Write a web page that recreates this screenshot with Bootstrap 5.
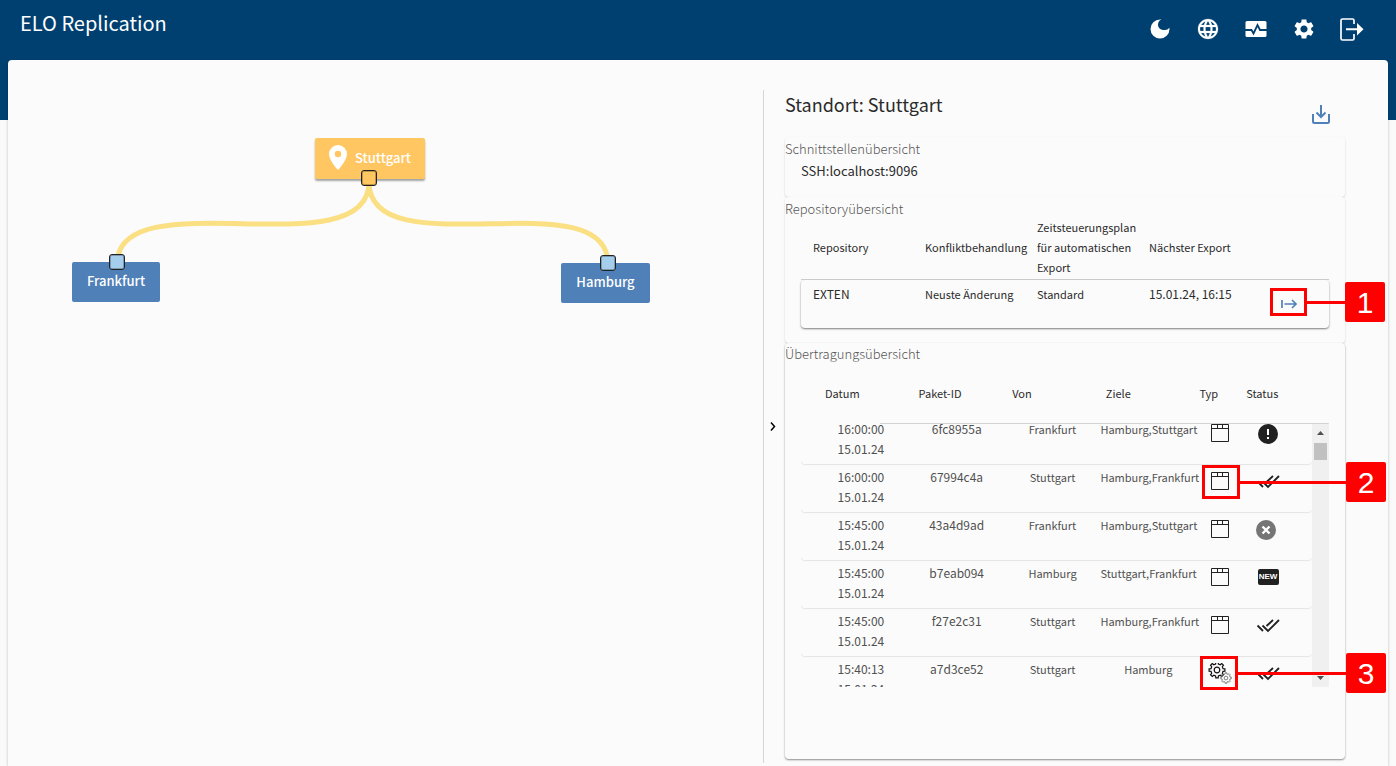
<!DOCTYPE html>
<html lang="de">
<head>
<meta charset="utf-8">
<meta name="viewport" content="width=device-width, initial-scale=1">
<title>ELO Replication</title>
<link href="https://cdn.jsdelivr.net/npm/bootstrap@5.3.0/dist/css/bootstrap.min.css" rel="stylesheet">
<style>
  body { font-family: "Noto Sans CJK SC", "Liberation Sans", sans-serif; font-size: 11px; line-height: 20px; color: #2b2b2b;
    background: #fafafa linear-gradient(#004071, #004071) no-repeat 0 0 / 100% 120px; }
  .app-bar { height: 60px; padding: 0 20px; }
  .app-title { font-size: 20px; line-height: 24px; padding-top: 11px; }
  .icon-btn { width: 48px; height: 58px; padding: 0; border: 0; background: none; color: inherit; display: grid; place-items: center; }
  .icon-btn svg { width: 24px; height: 24px; }
  .workspace { display: grid; grid-template-columns: 755fr 625fr; margin: 0 8px; background: #fbfbfb; border-radius: 4px 4px 0 0; box-shadow: 0 1px 3px rgba(0,0,0,.25); }
  .site-node { position: absolute; display: flex; align-items: center; justify-content: center; height: 40px; border-radius: 2px; background: #5080b8; color: #fff; font-size: 13px; line-height: 18px; font-weight: 500; border: 0; padding: 0 0 2px; }
  .site-node.active-site { background: #ffc661; gap: 8px; height: 41px; box-shadow: 0 2px 2px rgba(0,0,0,.35); }
  .port { position: absolute; width: 16px; height: 16px; border: 1px solid #222; box-shadow: inset 0 0 0 1px rgba(0,0,0,.25); border-radius: 3px; background: #a5cdec; }
  .port.out { background: #ffc661; }
  .details { margin: 30px 0 3px; padding-right: 43px; border-left: 1px solid #d6d6d6; }
  .collapse-btn { width: 21px; padding: 0 4px 4px 0; border: 0; background: none; flex: none; }
  .panel-head { height: 47px; }
  .panel-head .icon-btn { height: 47px; }
  .panel-title { font-size: 18px; line-height: 24px; font-weight: 400; padding-top: 2px; }
  .section-box { position: relative; border-radius: 4px; background: #fbfbfb; box-shadow: 0 1px 2px rgba(0,0,0,.18); padding-top: 4px; }
  .section-box h2 { font-size: 13px; line-height: 16px; font-weight: 300; color: #555; margin: 0; }
  .section-box.last-box { box-shadow: 0 1px 2px rgba(0,0,0,.45); padding-bottom: 72px; padding-top: 3px; }
  .host-box { height: 60px; }
  .repo-box { height: 146px; }
  .host-name { font-size: 13px; line-height: 28px; }
  .inset { margin: 0 16px; }
  .digits { font-size: 12px; }
  .grid-table, .grid-table tbody, .grid-table thead { display: block; }
  .grid-table th { font-weight: 400; }
  .grid-table th, .grid-table td { padding: 0; }
  .repo-table tr { display: grid; grid-template-columns: repeat(4, minmax(0, 112fr)) 68fr; padding: 0 0 0 12px; }
  .repo-table thead tr { height: 63px; align-items: center; border-bottom: 1px solid #d0d0d0; padding-bottom: 2px; }
  .repo-table tbody tr { height: 48px; padding-top: 4px; border-radius: 4px; box-shadow: 0 1px 2px rgba(0,0,0,.5); }
  .repo-table button { border: 0; background: none; padding: 0; width: 40px; height: 40px; display: grid; place-items: center; }
  .move-table tr { display: grid; grid-template-columns: repeat(4, minmax(0, 2fr)) minmax(0, 1fr) minmax(0, 1fr); }
  .move-table thead tr { height: 62px; align-items: center; padding: 0 36px 0 24px; }
  .move-table thead { background: linear-gradient(#d3d3d3, #d3d3d3) no-repeat 100% 100% / 85% 1px; }
  .move-table tbody { height: 263px; overflow: hidden; padding-right: 17px; color: #505050; }
  .move-table tbody tr { height: 48px; padding: 3px 20px 0 12px; text-align: center; border-radius: 4px; box-shadow: 0 1px 1px rgba(0,0,0,.09); }
  .move-table td:nth-child(4) { white-space: nowrap; }
  .move-table td:first-child { padding: 0 20px; }
  .move-table svg { display: block; margin: 0 auto; color: #212121; }
  .move-table td:nth-child(5) svg { margin-top: 4px; }
  .move-table td:nth-child(6) svg { margin-top: 3px; }
  .new-tag { display: block; width: 21px; height: 16px; margin: 6px auto 0; border-radius: 2px; background: #212121; color: #fff; font: bold 8px/16px "Liberation Sans", sans-serif; }
  .scroll-track { position: absolute; right: 16px; top: 81px; width: 17px; height: 263px; background: #f0f0f0; }
  .scroll-thumb { width: 13px; height: 17px; background: #c1c1c1; }
  .callout { position: absolute; display: flex; align-items: center; pointer-events: none; }
  .callout i { width: 38px; height: 34px; border: 3px solid #f00; }
  .callout b { height: 3px; background: #f00; flex: 1; }
  .callout span { width: 40px; height: 40px; border-radius: 2px; background: #f00; color: #fff; font: 30px/41px "Liberation Sans", sans-serif; text-align: center; }
  .callout-1 { top: 85px; right: -40px; width: 115px; }
  .callout-1 i { width: 37px; height: 28px; }
  .callout-2 { top: 119px; right: -41px; width: 184px; }
  .callout-3 { top: 310px; right: -41px; width: 186px; }
</style>
</head>
<body class="vh-100 overflow-hidden d-flex flex-column">
<svg class="d-none" aria-hidden="true">
  <symbol id="package" viewBox="0 0 20 20"><path fill="none" stroke="currentColor" d="M1.500 1.500h17v17h-17zM1.500 5.500h17M7.500 1.500v4M12.500 1.500v4"/></symbol>
  <symbol id="done" viewBox="0 0 24 24"><path fill="none" stroke="currentColor" stroke-width="1.800" d="M1.500 11.500l5.500 5.500M6.500 11.500l5.500 5.500L23 6M10.500 12L17 6"/></symbol>
  <symbol id="cog" viewBox="-9 -9 18 18"><path d="M6-1.400L7.900-1.200V1.200L6 1.400 5.300 3.300 6.500 4.700 4.700 6.500 3.300 5.300 1.400 6 1.200 7.900H-1.200L-1.400 6-3.300 5.300-4.700 6.500-6.500 4.700-5.300 3.300-6 1.400-7.900 1.200V-1.200L-6-1.400-5.300-3.300-6.500-4.700-4.700-6.500-3.300-5.300-1.400-6-1.200-7.900H1.200L1.400-6 3.300-5.300 4.700-6.500 6.500-4.700 5.300-3.300Z"/><circle r="2.800"/></symbol>
  <symbol id="gear" viewBox="0 0 24 24"><path d="M19.140 12.940c.040-.300.060-.610.060-.940 0-.320-.020-.640-.070-.940l2.030-1.580c.180-.140.230-.410.120-.610l-1.920-3.320c-.120-.220-.370-.290-.590-.220l-2.390.960c-.500-.380-1.030-.700-1.620-.940L14.400 2.810c-.040-.240-.240-.410-.480-.410h-3.840c-.240 0-.430.170-.470.410L9.250 5.350c-.590.240-1.130.570-1.620.940L5.240 5.330c-.220-.080-.470 0-.590.220L2.740 8.870c-.120.210-.080.470.120.610l2.030 1.580c-.050.300-.090.630-.090.940s.020.640.070.940l-2.030 1.580c-.180.140-.230.410-.120.610l1.920 3.320c.120.220.370.290.590.220l2.390-.960c.500.380 1.030.700 1.620.940l.360 2.540c.050.240.240.410.480.410h3.840c.240 0 .440-.170.470-.410l.360-2.540c.590-.240 1.130-.560 1.620-.940l2.390.960c.220.080.470 0 .590-.220l1.920-3.320c.120-.220.070-.470-.120-.610l-2.010-1.580zM12 15.600c-1.980 0-3.600-1.620-3.600-3.600s1.620-3.600 3.600-3.600 3.600 1.620 3.600 3.600-1.620 3.600-3.600 3.600z"/></symbol>
</svg>

<header class="app-bar d-flex justify-content-between flex-shrink-0 text-white">
  <h1 class="app-title mb-0 fw-normal">ELO Replication</h1>
  <nav class="d-flex">
    <button class="icon-btn" type="button" aria-label="Dunkles Design"><svg viewBox="0 0 24 24" fill="currentColor"><path d="M12 2.500a9.500 9.500 0 1 0 9.500 9.500c0-.46-.04-.92-.1-1.360a5.389 5.389 0 0 1-4.900 2.260 5.403 5.403 0 0 1-3.140-10.300c-.440-.060-.900-.100-1.360-.100z"/></svg></button>
    <button class="icon-btn" type="button" aria-label="Sprache"><svg viewBox="0 0 24 24" fill="currentColor" stroke="currentColor" stroke-width=".2"><path d="M11.990 2C6.470 2 2 6.480 2 12s4.470 10 9.990 10C17.520 22 22 17.520 22 12S17.520 2 11.990 2zm6.930 6h-2.950c-.320-1.250-.780-2.450-1.380-3.560 1.840.630 3.370 1.910 4.330 3.560zM12 4.040c.830 1.200 1.480 2.530 1.910 3.960h-3.820c.430-1.430 1.080-2.760 1.910-3.960zM4.260 14C4.100 13.360 4 12.690 4 12s.100-1.360.260-2h3.380c-.080.660-.140 1.320-.140 2 0 .680.060 1.340.140 2H4.260zm.820 2h2.950c.320 1.250.780 2.450 1.380 3.560-1.840-.630-3.370-1.900-4.330-3.560zm2.950-8H5.080c.960-1.660 2.490-2.930 4.330-3.560C8.810 5.550 8.350 6.750 8.030 8zM12 19.960c-.830-1.200-1.480-2.530-1.910-3.960h3.820c-.430 1.430-1.080 2.760-1.910 3.960zM14.340 14H9.660c-.090-.660-.160-1.320-.160-2 0-.680.070-1.350.160-2h4.680c.090.650.160 1.320.160 2 0 .680-.070 1.340-.160 2zm.250 5.560c.600-1.110 1.060-2.310 1.380-3.560h2.950c-.960 1.650-2.490 2.930-4.330 3.560zM16.360 14c.080-.660.140-1.320.140-2 0-.680-.060-1.340-.140-2h3.380c.160.640.260 1.310.260 2s-.100 1.360-.260 2h-3.380z"/></svg></button>
    <button class="icon-btn" type="button" aria-label="Überwachung"><svg viewBox="0 0 24 24"><rect x="1.500" y="4" width="21" height="16" rx="1.500" fill="currentColor"/><path d="M1 13h6.500l2 3.500 4-8.500 2.500 5H23" fill="none" stroke="#004071" stroke-width="1.800"/></svg></button>
    <button class="icon-btn" type="button" aria-label="Einstellungen"><svg fill="currentColor"><use href="#gear"/></svg></button>
    <button class="icon-btn" type="button" aria-label="Abmelden"><svg viewBox="0 0 24 24" overflow="visible"><path d="M14 7V3.500Q14 2 12.500 2h-10Q1 2 1 3.500v18Q1 23 2.500 23h10q1.500 0 1.500-1.500V17" fill="none" stroke="currentColor" stroke-width="1.700"/><path d="M6 11.300h11V6l6.500 6.300L17 18.500v-5.200H6z" fill="currentColor"/></svg></button>
  </nav>
</header>

<main class="workspace flex-grow-1">
  <div class="position-relative">
    <svg class="position-absolute top-0 start-0 w-100 h-100" fill="none" stroke="#fadf83" stroke-width="5" aria-hidden="true">
      <path d="M361 122C361 210 109 118 109 204"/>
      <path d="M361 122C361 210 600 118 600 204"/>
    </svg>
    <button type="button" class="site-node active-site" style="left:307px;top:78px;width:110px">
      <svg width="18" height="25" viewBox="0 0 18 25" fill="#fff"><path fill-rule="evenodd" d="M9 0a9 9 0 0 0-9 9c0 6.500 9 16 9 16s9-9.500 9-16a9 9 0 0 0-9-9zm0 12.200a3.200 3.200 0 1 1 0-6.400 3.200 3.200 0 0 1 0 6.400z"/></svg>
      Stuttgart</button>
    <button type="button" class="site-node" style="left:64px;top:202px;width:88px">Frankfurt</button>
    <button type="button" class="site-node" style="left:553px;top:203px;width:89px">Hamburg</button>
    <div class="port out" style="left:353px;top:110px"></div>
    <div class="port" style="left:101px;top:194px"></div>
    <div class="port" style="left:592px;top:195px"></div>
  </div>

  <aside class="details d-flex">
    <button type="button" class="collapse-btn" aria-label="Details einklappen"><svg width="6" height="9" viewBox="0 0 6 9" fill="none" stroke="#000" stroke-width="1.500"><path d="M1 .5l3.500 4L1 8.500"/></svg></button>
    <div class="flex-grow-1">
      <div class="panel-head d-flex justify-content-between">
        <h2 class="panel-title mb-0">Standort: Stuttgart</h2>
        <button type="button" class="icon-btn" aria-label="Bericht herunterladen"><svg viewBox="0 0 24 24" fill="none" stroke="#5080b8" stroke-width="2"><path d="M4 12v7.500q0 1.500 1.500 1.500h13q1.500 0 1.500-1.500V12M12 3v11M7.500 10.500L12 15l4.500-4.500"/></svg></button>
      </div>

      <section class="section-box host-box">
        <h2>Schnittstellenübersicht</h2>
        <p class="host-name inset mb-0">SSH:localhost:9096</p>
      </section>

      <section class="section-box repo-box">
        <h2>Repositoryübersicht</h2>
        <div class="inset">
          <table class="grid-table repo-table">
            <thead><tr><th>Repository</th><th>Konfliktbehandlung</th><th>Zeitsteuerungsplan für automatischen Export</th><th>Nächster Export</th><th></th></tr></thead>
            <tbody><tr><td class="digits">EXTEN</td><td>Neuste Änderung</td><td>Standard</td><td class="digits">15.01.24, 16:15</td><td class="ps-2"><button type="button" aria-label="Export starten"><svg width="16" height="12" viewBox="0 0 16 12" fill="none" stroke="#5080b8" stroke-width="1.700"><path d="M1 2v8M3.500 6H15M11 2l4 4-4 4"/></svg></button></td></tr></tbody>
          </table>
        </div>
        <div class="callout callout-1"><i></i><b></b><span>1</span></div>
      </section>

      <section class="section-box last-box">
        <h2>Übertragungsübersicht</h2>
        <div class="inset">
          <table class="grid-table move-table">
            <thead><tr><th>Datum</th><th>Paket-ID</th><th>Von</th><th>Ziele</th><th>Typ</th><th>Status</th></tr></thead>
            <tbody id="transfers">
              <tr><td class="digits">16:00:00 15.01.24</td><td class="digits">6fc8955a</td><td>Frankfurt</td><td>Hamburg,Stuttgart</td><td><svg width="20" height="20"><use href="#package"/></svg></td><td><svg width="24" height="24" viewBox="0 0 24 24"><circle cx="12" cy="12" r="10" fill="currentColor"/><path d="M12 7v6M12 15v2" stroke="#fff" stroke-width="2"/></svg></td></tr>
              <tr><td class="digits">16:00:00 15.01.24</td><td class="digits">67994c4a</td><td>Stuttgart</td><td>Hamburg,Frankfurt</td><td><svg width="20" height="20"><use href="#package"/></svg></td><td><svg width="24" height="24"><use href="#done"/></svg></td></tr>
              <tr><td class="digits">15:45:00 15.01.24</td><td class="digits">43a4d9ad</td><td>Frankfurt</td><td>Hamburg,Stuttgart</td><td><svg width="20" height="20"><use href="#package"/></svg></td><td><svg width="24" height="24" viewBox="0 0 24 24"><circle cx="10" cy="12" r="10" fill="#757575"/><path d="M6.500 8.500l7 7M13.500 8.500l-7 7" stroke="#fff" stroke-width="2.400"/></svg></td></tr>
              <tr><td class="digits">15:45:00 15.01.24</td><td class="digits">b7eab094</td><td>Hamburg</td><td>Stuttgart,Frankfurt</td><td><svg width="20" height="20"><use href="#package"/></svg></td><td><span class="new-tag">NEW</span></td></tr>
              <tr><td class="digits">15:45:00 15.01.24</td><td class="digits">f27e2c31</td><td>Stuttgart</td><td>Hamburg,Frankfurt</td><td><svg width="20" height="20"><use href="#package"/></svg></td><td><svg width="24" height="24"><use href="#done"/></svg></td></tr>
              <tr><td class="digits">15:40:13 15.01.24</td><td class="digits">a7d3ce52</td><td>Stuttgart</td><td>Hamburg</td><td><svg width="24" height="24" viewBox="0 0 24 24" fill="none"><use href="#cog" x="0" y="-2" width="18" height="18" stroke="#111" stroke-width="1.200"/><use href="#cog" x="12" y="9" width="12" height="12" stroke="#777" stroke-width="1.400"/></svg></td><td><svg width="24" height="24"><use href="#done"/></svg></td></tr>
            </tbody>
          </table>
        </div>
        <div class="scroll-track d-flex flex-column align-items-center justify-content-between">
          <div class="d-flex flex-column align-items-center">
            <svg width="17" height="19" viewBox="0 0 17 19" fill="#505050"><path d="M5 11h7L8.500 7z"/></svg>
            <div class="scroll-thumb"></div>
          </div>
          <svg width="17" height="17" viewBox="0 0 17 17" fill="#505050"><path d="M5 6h7L8.500 10z"/></svg>
        </div>
        <div class="callout callout-2"><i></i><b></b><span>2</span></div>
        <div class="callout callout-3"><i></i><b></b><span>3</span></div>
      </section>
    </div>
  </aside>
</main>
<script src="https://cdn.jsdelivr.net/npm/bootstrap@5.3.0/dist/js/bootstrap.bundle.min.js"></script>
<script>
  document.getElementById('transfers').scrollTop = 8;
</script>
</body>
</html>
